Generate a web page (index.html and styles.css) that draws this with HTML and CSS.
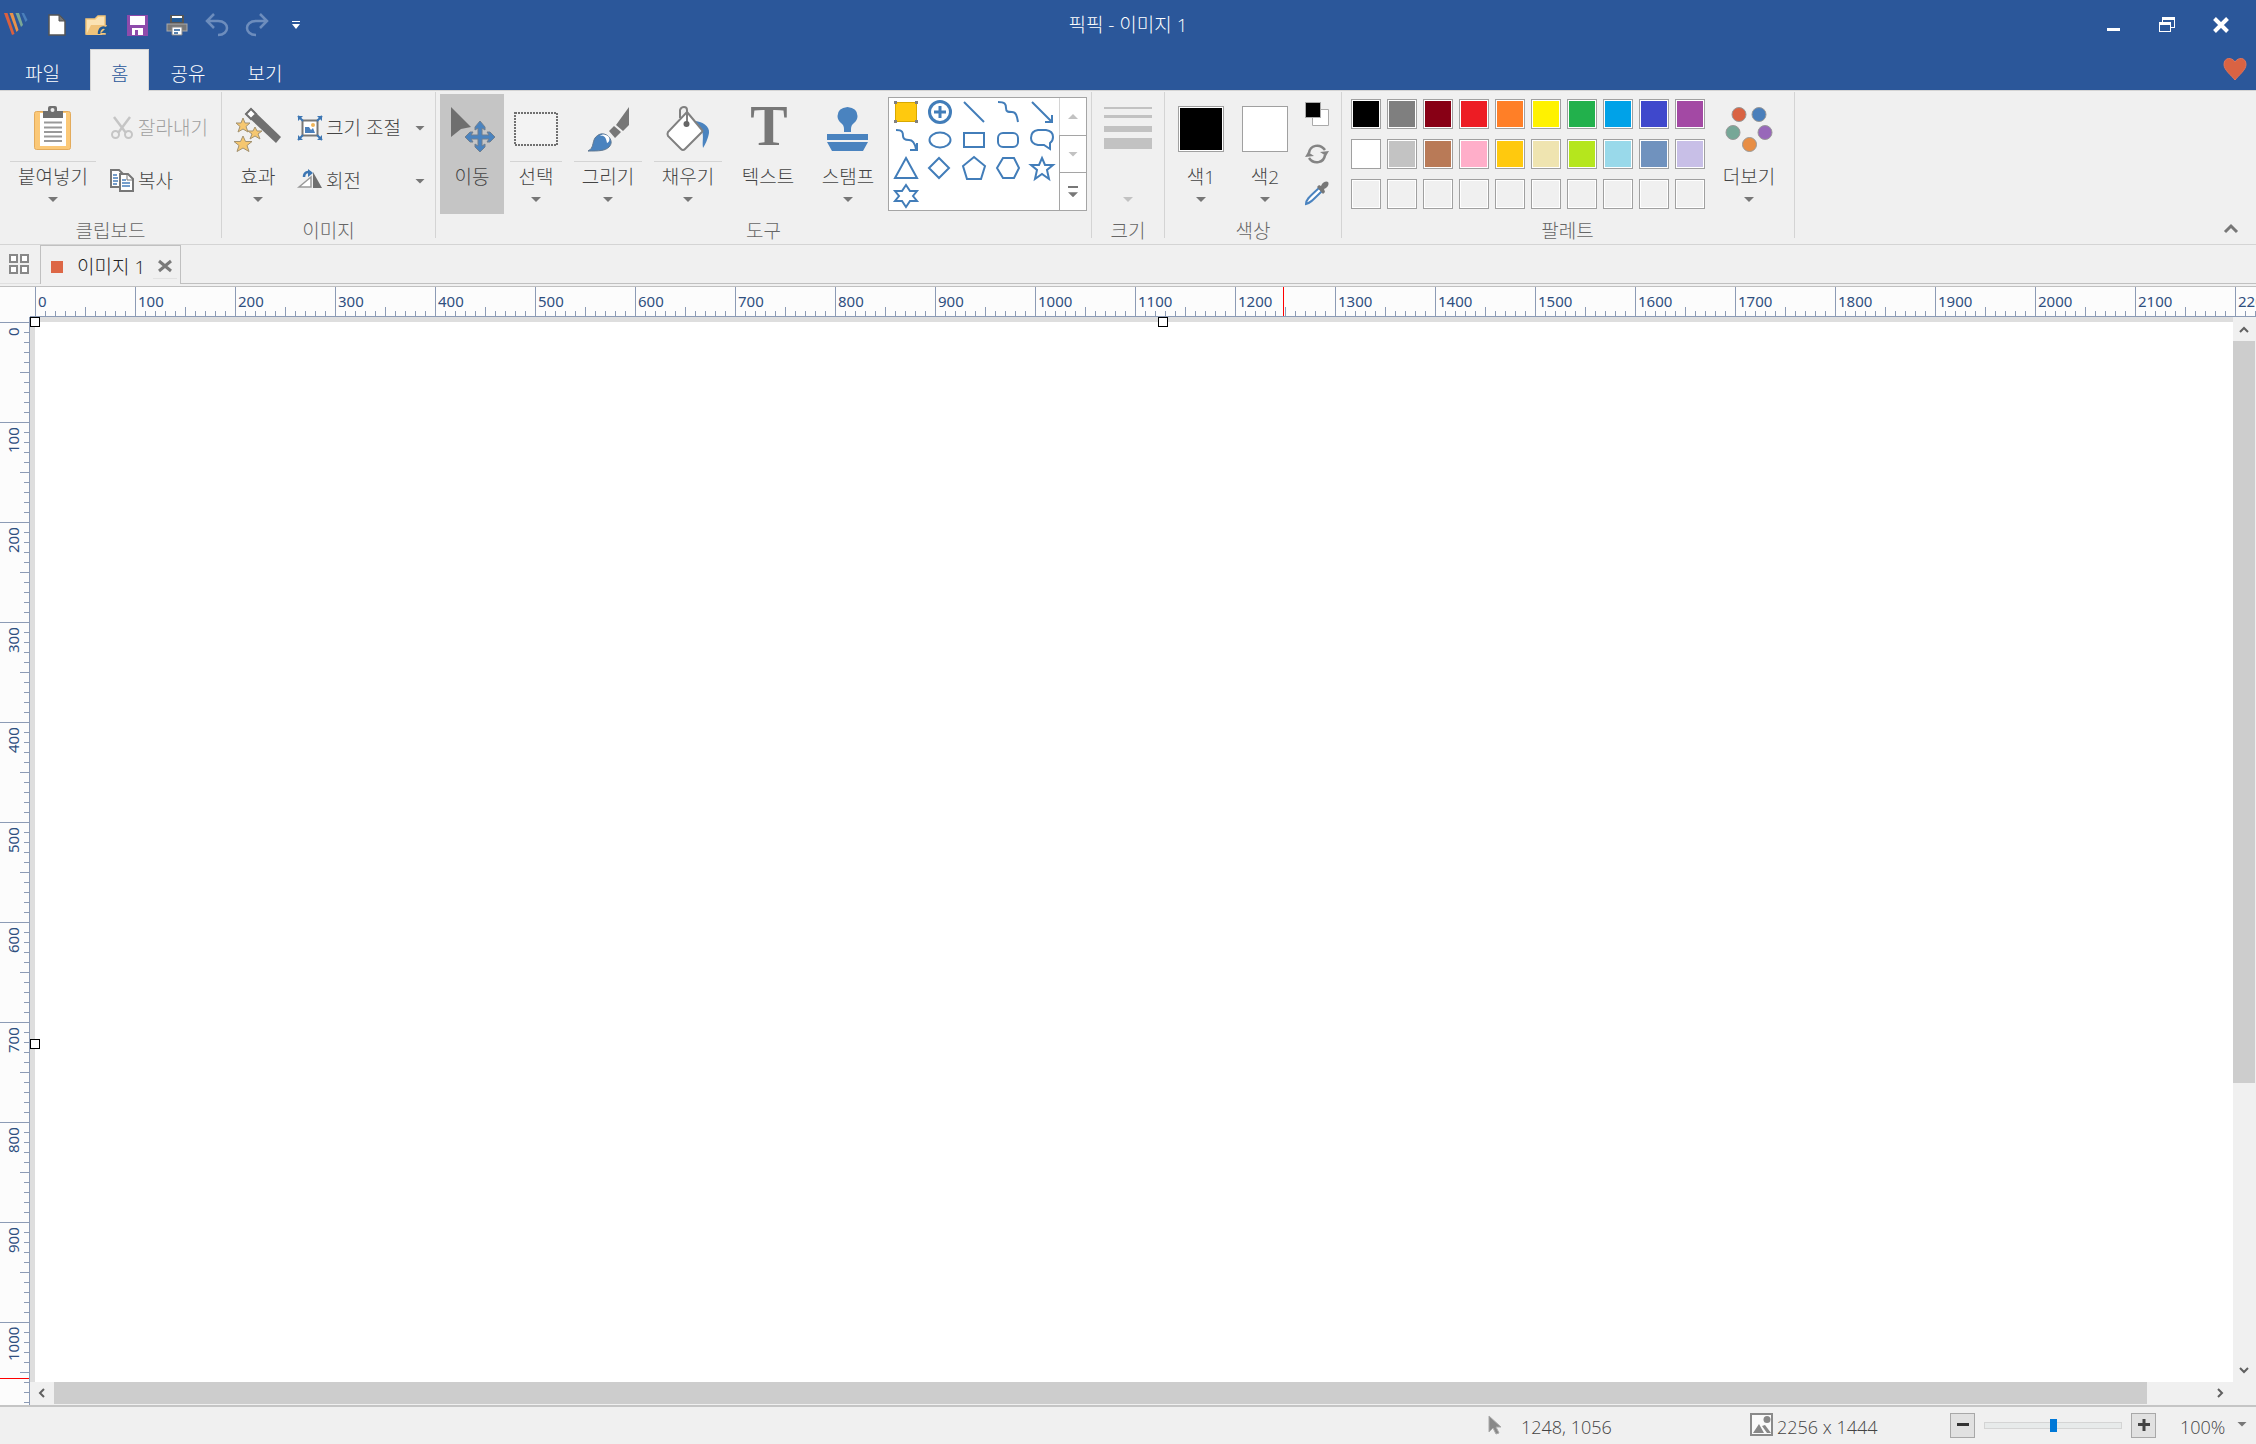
FILE: index.html
```html
<!DOCTYPE html>
<html lang="ko">
<head>
<meta charset="utf-8">
<title>픽픽 - 이미지 1</title>
<link rel="stylesheet" href="styles.css">
</head>
<body>
<header class="titlebar">
  <div class="quick">
    <svg class="logo" viewBox="0 0 24 24"><path fill="#d9603f" d="M0 0h3.500l7 21-2.500 1z"/><path fill="#e8924a" d="M5.500 0H9l5.500 17-2 2z"/><path fill="#7aa896" d="M11.500 0H15l4 12-2 2z"/><path fill="#4a7fbb" d="M17.500 0H20l3.500 7-2 2z"/></svg>
    <button class="quick-btn" aria-label="새로 만들기"><svg class="i24" viewBox="0 0 24 24"><path fill="#fff" stroke="#555" stroke-width="1.500" d="M4 2h10l6 6v14H4z"/><path fill="#777" stroke="#555" d="M14 2v6h6z"/></svg></button>
    <button class="quick-btn" aria-label="열기"><svg class="i24" viewBox="0 0 24 24"><path fill="#fbe3b4" stroke="#f3c577" stroke-width="1.500" d="M1 21V6h9l3-3h7v18z"/><path fill="#f0c37a" d="M1 22l5-10h16l-5 10z"/><path fill="none" stroke="#235a94" stroke-width="2.500" d="M14 21c0-6 4-8 8-5"/><path fill="#235a94" d="M24 12v8h-8z"/></svg></button>
    <button class="quick-btn" aria-label="저장"><svg class="i24" viewBox="0 0 24 24"><path fill="#8e4bab" d="M2 2h21v21H2z"/><path fill="#fff" d="M5 3h15v9H5zM7 15h11v7H7z"/><path fill="#8e4bab" d="M10 17h3v5h-3z"/></svg></button>
    <button class="quick-btn" aria-label="인쇄"><svg class="i24" viewBox="0 0 24 24"><path fill="#235a94" stroke="#555" stroke-width="2" d="M6 10V3h12v7z"/><path fill="#fff" d="M7 3h10v2H7z"/><rect x="2" y="11" width="20" height="7" fill="#777" stroke="#aaa"/><path fill="#fff" stroke="#888" d="M7 14h10v8H7z"/><path stroke="#235a94" stroke-width="1.500" d="M9 17h6M9 20h4"/></svg></button>
    <button class="quick-btn" aria-label="실행 취소"><svg class="i24" viewBox="0 0 24 24"><path fill="none" stroke="#6d8dbd" stroke-width="2.500" d="M3 8h10c12 0 12 14 0 14M9 1L2 8l7 7"/></svg></button>
    <button class="quick-btn" aria-label="다시 실행"><svg class="i24" viewBox="0 0 24 24"><path fill="none" stroke="#6d8dbd" stroke-width="2.500" d="M21 8H11C-1 8-1 22 11 22M15 1l7 7-7 7"/></svg></button>
    <button class="quick-btn narrow" aria-label="빠른 실행 도구 모음 사용자 지정"><svg class="i8" viewBox="0 0 8 8"><path fill="#fff" d="M0 0h8v1H0zM0 3h8L4 8z"/></svg></button>
  </div>
  <h1 class="title">픽픽 - 이미지 1</h1>
  <div class="window-btns">
    <button aria-label="최소화"><svg class="i16" viewBox="0 0 16 16"><path fill="#fff" d="M2 11h13v3H2z"/></svg></button>
    <button aria-label="이전 크기로"><svg class="i16" viewBox="0 0 16 16"><path fill="#fff" fill-rule="evenodd" d="M3 0h13v11h-4v-1h3V3H4v2H3zM0 5h12v10H0zM1 8v6h10V8z"/></svg></button>
    <button aria-label="닫기"><svg class="i16" viewBox="0 0 16 16"><path stroke="#fff" stroke-width="4" d="M1.500 1.500l13 13M14.500 1.500l-13 13"/></svg></button>
  </div>
</header>
<nav class="menu">
  <button class="menu-tab file">파일</button>
  <button class="menu-tab active">홈</button>
  <button class="menu-tab">공유</button>
  <button class="menu-tab">보기</button>
  <button class="heart" aria-label="후원"><svg class="i24" viewBox="0 0 24 24"><path fill="#d96343" stroke="#e2745a" d="M12 22C8 17 1 12 1 6.500 1-1 9-1 12 4c3-5 11-5 11 2.500C23 12 16 17 12 22z"/></svg></button>
</nav>

<main class="ribbon">
  <section class="group">
    <div class="tools">
      <button class="big paste"><svg class="i48" viewBox="0 0 48 48"><rect x="5.500" y="7.500" width="36" height="38" rx="2" fill="#fbc877" stroke="#e3ab5c"/><path fill="#fff" d="M11 9h26v33H11z"/><path fill="#707070" d="M14 14V7h5V4q0-2 2-2h5q2 0 2 2v3h6v7z"/><circle cx="23.500" cy="6" r="2" fill="#eee"/><path stroke="#999" stroke-width="2" d="M15 18.500h18M15 23.500h18M15 28h18M15 32.500h18M15 37h18"/></svg><span class="label ruled">붙여넣기</span><i class="caret"></i></button>
      <div class="stack">
        <button class="small" disabled><svg class="i24" viewBox="0 0 24 24"><path fill="none" stroke="#c5c5c5" stroke-width="2.500" d="M4 1l12 16M20 1L8 17"/><circle cx="5.500" cy="18.500" r="3.500" fill="none" stroke="#c5c5c5" stroke-width="2"/><circle cx="18.500" cy="18.500" r="3.500" fill="none" stroke="#c5c5c5" stroke-width="2"/></svg>잘라내기</button>
        <button class="small"><svg class="i24" viewBox="0 0 24 24"><path fill="#fff" stroke="#777" stroke-width="2" d="M1 1h8l4 4v13H1z"/><path stroke="#4a7fbb" stroke-width="1.500" d="M3 6h4M3 9h5M3 12h5M3 15h4"/><path fill="#fff" stroke="#777" stroke-width="2" d="M10 5h8l5 5v12H10z"/><path fill="none" stroke="#777" d="M17 5v6h6"/><path stroke="#4a7fbb" stroke-width="1.500" d="M12 11h4M12 14h8M12 17h8"/></svg>복사</button>
      </div>
    </div>
    <h2>클립보드</h2>
  </section>
  <section class="group">
    <div class="tools">
      <button class="big"><svg class="i48" viewBox="0 0 48 48"><path fill="#707070" d="M17 4l30 29-5 6L11 10z"/><path fill="#fff" stroke="#707070" stroke-width="2" d="M17 5l5 5-5 5-5-5z"/><g fill="#f6c76f" stroke="#a39270"><path d="M9 14l2 5h5l-4 3.500 2 5.500-5-3-5 3 2-5.500L2 19h5z"/><path d="M21 23l2 4h5l-4 3 2 5-5-3-5 3 2-5-4-3h5z"/><path d="M9 32l2.500 5.500H18l-5 4 2 6-6-3.500-6 3.500 2-6-5-4h6.500z"/></g></svg><span class="label">효과</span><i class="caret"></i></button>
      <div class="stack wide">
        <button class="small"><svg class="i24" viewBox="0 0 24 24"><rect x="4.500" y="4.500" width="15" height="15" fill="#fff" stroke="#777" stroke-width="2"/><path fill="#4a7fbb" d="M7 17V11h4l2 3 2-2 2 5z"/><circle cx="15" cy="9" r="2" fill="#f0b55a"/><path fill="#3d76b3" d="M0 0h5L0 5zM24 0v5l-5-5zM0 24v-5l5 5zM24 24h-5l5-5z"/><path stroke="#3d76b3" stroke-width="2" d="M0 0l5 5M24 0l-5 5M0 24l5-5M24 24l-5-5"/></svg>크기 조절<i class="caret"></i></button>
        <button class="small"><svg class="i24" viewBox="0 0 24 24"><path fill="#fff" stroke="#999" stroke-width="1.500" d="M1 18L13 8v10z"/><path fill="#6f6f6f" d="M15 3l9 16h-9z"/><path fill="none" stroke="#3d76b3" stroke-width="2.500" d="M6 8c0-5 4-6 7-4"/><path fill="#3d76b3" d="M10 0l5 4-5 4z"/></svg>회전<i class="caret"></i></button>
      </div>
    </div>
    <h2>이미지</h2>
  </section>
  <section class="group">
    <div class="tools">
      <button class="big pressed"><svg class="i48" viewBox="0 0 48 48"><path fill="#6f6f6f" d="M3 3l20 20-10 2-10 8z"/><path fill="#4a83bf" stroke="#6f7f90" d="M32 17l5 6v3l-3-2v7h7l-2-3h3l5 5-5 5h-3l2-3h-7v7l3-2v3l-5 5-5-5v-3l3 2v-7h-7l2 3h-3l-5-5 5-5h3l-2 3h7v-7l-3 2v-3z"/></svg><span class="label">이동</span></button>
      <button class="big"><svg class="i48" viewBox="0 0 48 48"><rect x="3" y="9" width="42" height="32" fill="#f3f3f3" stroke="#707070" stroke-width="2" stroke-dasharray="2 1"/></svg><span class="label ruled">선택</span><i class="caret"></i></button>
      <button class="big w80"><svg class="i48" viewBox="0 0 48 48"><path fill="#777" d="M45 3v18l-6 6-7-6zM30 22l7 6-6 6-6-7z"/><path fill="#4a83bf" stroke="#5f7790" d="M4 47c6-3 4-8 7-13 3-4 8-6 13-2 4 4 4 8 1 11-4 4-10 4-21 4z"/><path fill="#fff" d="M16 32c4-1 6 1 7 7 3-1 3-5 1-7-3-2-6-2-8 0z"/></svg><span class="label ruled">그리기</span><i class="caret"></i></button>
      <button class="big w80"><svg class="i48" viewBox="0 0 48 48"><path fill="#4a83bf" d="M30 17c8 0 16 5 15 12-1 6-4 12-6 15-1-7 1-11-1-17z"/><path fill="#fff" stroke="#808080" stroke-width="2" d="M23 8l15 18q1 1 0 2L21 45q-2 2-4 0L4 32q-1-2 0-4z"/><path fill="none" stroke="#808080" stroke-width="2" d="M16 14V6q1-3 4-3t3 3v13"/><circle cx="22.500" cy="20" r="3" fill="#666"/></svg><span class="label ruled">채우기</span><i class="caret"></i></button>
      <button class="big w80"><svg class="i48" viewBox="0 0 48 48"><text class="type-icon" x="25" y="41" text-anchor="middle">T</text></svg><span class="label">텍스트</span></button>
      <button class="big w80"><svg class="i48" viewBox="0 0 48 48"><path fill="#4a83bf" d="M23.500 3q10 1 10 9 0 4-3.500 7-3 2-3 6v3h-7v-3q0-4-3-6-3.500-3-3.500-7 0-8 10-9zM3 30h41v6H3zM3 38h41l-5 9H8z"/></svg><span class="label">스탬프</span><i class="caret"></i></button>
      <div class="gallery">
        <div class="shapes">
          <button aria-label="강조"><svg class="i24" viewBox="0 0 24 24"><rect x="1.500" y="2.500" width="21" height="19" fill="#ffc90e" stroke="#d8a800" stroke-width="1"/><path fill="#808080" stroke="none" d="M0 1h3v3H0zM21 1h3v3h-3zM0 20h3v3H0zM21 20h3v3h-3z"/></svg></button>
          <button aria-label="번호"><svg class="i24" viewBox="0 0 24 24"><circle cx="12" cy="12" r="10.500" stroke-width="3"/><path stroke-width="3" d="M12 6v12M6 12h12"/></svg></button>
          <button aria-label="선"><svg class="i24" viewBox="0 0 24 24"><path d="M2 2l20 20"/></svg></button>
          <button aria-label="곡선"><svg class="i24" viewBox="0 0 24 24"><path d="M2 2c7 0 8 2 8 6s2 4 6 4 5 4 6 10"/></svg></button>
          <button aria-label="화살표"><svg class="i24" viewBox="0 0 24 24"><path d="M2 2l19 19M22 15v7h-7"/></svg></button>
          <button aria-label="곡선 화살표"><svg class="i24" viewBox="0 0 24 24"><path d="M2 2c7 0 7 3 7 6s2 4 6 4 6 4 7 9M23 15v7h-7"/></svg></button>
          <button aria-label="타원"><svg class="i24" viewBox="0 0 24 24"><ellipse cx="12" cy="12" rx="10.500" ry="7.500"/></svg></button>
          <button aria-label="사각형"><svg class="i24" viewBox="0 0 24 24"><path d="M2 5h20v14H2z"/></svg></button>
          <button aria-label="둥근 사각형"><svg class="i24" viewBox="0 0 24 24"><rect x="2" y="5" width="20" height="14" rx="5"/></svg></button>
          <button aria-label="말풍선"><svg class="i24" viewBox="0 0 24 24"><path d="M8 2h8q7 1 7 7 0 4-3 6v6l-6-4H8q-7-1-7-7 0-7 7-8z"/></svg></button>
          <button aria-label="삼각형"><svg class="i24" viewBox="0 0 24 24"><path d="M12 2l11 20H1z"/></svg></button>
          <button aria-label="마름모"><svg class="i24" viewBox="0 0 24 24"><path d="M11 2l10 10-10 10L1 12z"/></svg></button>
          <button aria-label="오각형"><svg class="i24" viewBox="0 0 24 24"><path d="M12 1l11 9-4 13H5L1 10z"/></svg></button>
          <button aria-label="육각형"><svg class="i24" viewBox="0 0 24 24"><path d="M7 2h11l5 10-5 10H7L1 12z"/></svg></button>
          <button aria-label="별"><svg class="i24" viewBox="0 0 24 24"><path d="M12 2l3 7h8l-6 5 2 9-7-5-7 5 2-9-6-5h8z"/></svg></button>
          <button aria-label="육각별"><svg class="i24" viewBox="0 0 24 24"><path d="M12 1l4 6h7l-4 5 4 5h-7l-4 6-4-6H1l4-5-4-5h7z"/></svg></button>
        </div>
        <div class="gallery-nav">
          <button aria-label="위로"><i class="caret up dim"></i></button>
          <button aria-label="아래로"><i class="caret dim"></i></button>
          <button aria-label="모두 보기"><i class="bar"></i><i class="caret"></i></button>
        </div>
      </div>
    </div>
    <h2>도구</h2>
  </section>
  <section class="group">
    <div class="tools">
      <button class="big" aria-label="크기"><svg class="i48" viewBox="0 0 48 48"><path fill="#c2c2c2" d="M0 3h48v2H0zM0 11h48v3H0zM0 22h48v6H0zM0 34h48v11H0z"/></svg><span class="label"></span><i class="caret dim"></i></button>
    </div>
    <h2>크기</h2>
  </section>
  <section class="group">
    <div class="tools">
      <button class="big"><span class="ink"><span class="fill black"></span></span><span class="label">색1</span><i class="caret"></i></button>
      <button class="big"><span class="ink"><span class="fill white"></span></span><span class="label">색2</span><i class="caret"></i></button>
      <div class="stack mini">
        <button aria-label="기본 색"><svg class="i24" viewBox="0 0 24 24"><path fill="#fff" stroke="#aaa" d="M7.500 7.500h16v16h-16z"/><path stroke="#aaa" d="M.5.5h15v15H.5z"/><path d="M2 2h13v13H2z"/></svg></button>
        <button aria-label="색 바꾸기"><svg class="i24" viewBox="0 0 24 24"><path fill="none" stroke="#848484" stroke-width="2.500" d="M4 11c1-8 11-10 16-3M20 13c-1 8-11 10-16 3"/><path fill="#848484" d="M24 9l-3 5-6-4zM0 15l3-5 6 4z"/></svg></button>
        <button aria-label="색 선택"><svg class="i24" viewBox="0 0 24 24"><path fill="#fff" stroke="#4a83bf" stroke-width="2" d="M1 22c0-4 2-6 13-16l3 3C7 19 5 21 1 22z"/><path fill="#777" d="M12 5l2-2 2 1c2-5 6-5 7-4s1 5-4 7l1 3-2 2z"/></svg></button>
      </div>
    </div>
    <h2>색상</h2>
  </section>
  <section class="group">
    <div class="tools">
      <div class="palette">
        <button class="swatch" style="--c:#000000" aria-label="검정"></button><button class="swatch" style="--c:#7f7f7f" aria-label="회색"></button><button class="swatch" style="--c:#880015" aria-label="진한 빨강"></button><button class="swatch" style="--c:#ed1c24" aria-label="빨강"></button><button class="swatch" style="--c:#ff7f27" aria-label="주황"></button><button class="swatch" style="--c:#fff200" aria-label="노랑"></button><button class="swatch" style="--c:#22b14c" aria-label="초록"></button><button class="swatch" style="--c:#00a2e8" aria-label="청록"></button><button class="swatch" style="--c:#3f48cc" aria-label="남색"></button><button class="swatch" style="--c:#a349a4" aria-label="자주"></button>
        <button class="swatch" style="--c:#ffffff" aria-label="흰색"></button><button class="swatch" style="--c:#c3c3c3" aria-label="밝은 회색"></button><button class="swatch" style="--c:#b97a57" aria-label="갈색"></button><button class="swatch" style="--c:#ffaec9" aria-label="장미"></button><button class="swatch" style="--c:#ffc90e" aria-label="황금"></button><button class="swatch" style="--c:#efe4b0" aria-label="밝은 노랑"></button><button class="swatch" style="--c:#b5e61d" aria-label="라임"></button><button class="swatch" style="--c:#99d9ea" aria-label="밝은 청록"></button><button class="swatch" style="--c:#7092be" aria-label="청회색"></button><button class="swatch" style="--c:#c8bfe7" aria-label="연보라"></button>
        <button class="swatch" aria-label="빈 칸"></button><button class="swatch" aria-label="빈 칸"></button><button class="swatch" aria-label="빈 칸"></button><button class="swatch" aria-label="빈 칸"></button><button class="swatch" aria-label="빈 칸"></button><button class="swatch" aria-label="빈 칸"></button><button class="swatch" aria-label="빈 칸"></button><button class="swatch" aria-label="빈 칸"></button><button class="swatch" aria-label="빈 칸"></button><button class="swatch" aria-label="빈 칸"></button>
      </div>
      <button class="big w80"><svg class="i48" viewBox="0 0 48 48"><g stroke="#999"><circle cx="14" cy="10.500" r="7" fill="#d96343"/><circle cx="34" cy="10.500" r="7" fill="#4a7fbb"/><circle cx="8" cy="28.500" r="7" fill="#76a797"/><circle cx="40" cy="28.500" r="7" fill="#9868b9"/><circle cx="24.500" cy="40.500" r="7" fill="#e88e45"/></g></svg><span class="label">더보기</span><i class="caret"></i></button>
    </div>
    <h2>팔레트</h2>
  </section>
  <button class="collapse" aria-label="리본 메뉴 축소"><svg class="i16" viewBox="0 0 16 16"><path fill="none" stroke="#777" stroke-width="3" d="M2 12l6-6 6 6"/></svg></button>
</main>

<div class="docs">
  <button class="overview" aria-label="모든 이미지"><svg class="i20" viewBox="0 0 20 20"><path fill="#fff" stroke="#888" stroke-width="2" d="M1 1h7v7H1zM12 1h7v7h-7zM1 12h7v7H1zM12 12h7v7h-7z"/></svg></button>
  <div class="doc-tab"><i class="dot"></i><span>이미지 1</span><button class="doc-close" aria-label="탭 닫기"><svg class="i16" viewBox="0 0 16 16"><path stroke="#7a7a7a" stroke-width="3" d="M2 3l12 10M14 3L2 13"/></svg></button></div>
  <div class="docs-rest"></div>
</div>

<div class="workspace">
  <div class="corner"></div>
  <div class="ruler-h"><span>0</span><span>100</span><span>200</span><span>300</span><span>400</span><span>500</span><span>600</span><span>700</span><span>800</span><span>900</span><span>1000</span><span>1100</span><span>1200</span><span>1300</span><span>1400</span><span>1500</span><span>1600</span><span>1700</span><span>1800</span><span>1900</span><span>2000</span><span>2100</span><span>2200</span><i class="mark" style="left:1253px"></i></div>
  <div class="ruler-v"><div class="scale"><span>0</span><span>100</span><span>200</span><span>300</span><span>400</span><span>500</span><span>600</span><span>700</span><span>800</span><span>900</span><span>1000</span><i class="mark" style="top:1061px"></i></div></div>
  <div class="view"><div class="artboard" style="width:2256px;height:1444px"><i class="handle nw"></i><i class="handle n"></i><i class="handle w"></i></div></div>
  <div class="scroll-v">
    <button aria-label="위로 스크롤"><svg class="i12" viewBox="0 0 12 12"><path d="M2 9l4-4 4 4"/></svg></button>
    <div class="track"><div class="thumb"></div></div>
    <button aria-label="아래로 스크롤"><svg class="i12" viewBox="0 0 12 12"><path d="M2 4l4 4 4-4"/></svg></button>
  </div>
  <div class="scroll-h">
    <button aria-label="왼쪽으로 스크롤"><svg class="i12" viewBox="0 0 12 12"><path d="M8 2L4 6l4 4"/></svg></button>
    <div class="track"><div class="thumb"></div></div>
    <button aria-label="오른쪽으로 스크롤"><svg class="i12" viewBox="0 0 12 12"><path d="M3 2l4 4-4 4"/></svg></button>
  </div>
</div>

<footer class="status">
  <div class="cell pos"><svg class="i20" viewBox="0 0 20 20"><path fill="#888" stroke="#aaa" d="M4 1l12 11h-5l3 6-3 1-3-6-4 4z"/></svg><span>1248, 1056</span></div>
  <div class="cell dims"><svg class="i24" viewBox="0 0 24 24"><path fill="#fafafa" stroke="#8a8a8a" stroke-width="2" d="M1 1h21v21H1z"/><circle cx="17" cy="6.500" r="3.500" fill="#888"/><path fill="#888" d="M3 20l6-9 5 9zM12 13l3-1 6 8h-4z"/></svg><span>2256 x 1444</span></div>
  <button class="zoom-btn" aria-label="축소"><svg class="i12" viewBox="0 0 12 12"><path fill="#333" d="M0 4h12v3H0z"/></svg></button>
  <input class="zoom" type="range" min="0" max="100" value="50" aria-label="확대/축소">
  <button class="zoom-btn" aria-label="확대"><svg class="i12" viewBox="0 0 12 12"><path fill="#444" d="M0 4h12v3H0zM4.500 0h3v12h-3z"/></svg></button>
  <button class="zoom-value">100%<i class="caret"></i></button>
</footer>
</body>
</html>
```
FILE: styles.css
```css
* { box-sizing: border-box; }

body {
  margin: 0;
  height: 100vh;
  display: flex;
  flex-direction: column;
  overflow: hidden;
  background: #f0f0f0;
  color: #444;
  font: 300 19px/28px "Open Sans", "Noto Sans CJK KR", sans-serif;
}

button {
  margin: 0;
  padding: 0;
  border: 0;
  background: none;
  color: inherit;
  font: inherit;
  display: flex;
  align-items: center;
  justify-content: center;
}

svg { display: block; flex: none; overflow: visible; }
.i8 { width: 8px; height: 8px; }
.i12 { width: 12px; height: 12px; }
.i16 { width: 16px; height: 16px; }
.i20 { width: 20px; height: 20px; }
.i24 { width: 24px; height: 24px; }
.i48 { width: 48px; height: 48px; }

.caret {
  flex: none;
  width: 10px;
  height: 5px;
  background: #777;
  clip-path: polygon(0 0, 100% 0, 50% 100%);
}
.caret.dim { background: #c2c2c2; }
.caret.up { transform: rotate(180deg); }

/* Title bar */
.titlebar {
  flex: none;
  display: grid;
  grid-template-columns: 1fr auto 1fr;
  align-items: center;
  height: 49px;
  background: #2b579a;
  color: #fff;
}
.quick { display: flex; align-items: center; }
.logo { width: 24px; height: 24px; margin: 0 9px 0 4px; }
.quick-btn { width: 40px; height: 40px; }
.quick-btn.narrow { width: 38px; }
.title { margin: 0; padding-top: 1px; font-size: 19px; font-weight: 300; }
.window-btns { display: flex; justify-content: flex-end; padding-right: 8px; }
.window-btns button { width: 54px; height: 40px; }

/* Menu tabs */
.menu {
  flex: none;
  display: flex;
  height: 42px;
  padding-right: 9px;
  background: linear-gradient(#2b579a 41px, #d4d4d4 41px);
  color: #fff;
}
.menu-tab { padding: 6px 20px 0; border: 1px solid transparent; border-bottom: 0; }
.menu-tab.file { padding: 6px 24px 0; margin-right: 5px; }
.menu-tab.active { background: #f0f0f0; border-color: #d4d4d4; color: #2b579a; }
.heart { margin-left: auto; height: 41px; }

/* Ribbon */
.ribbon {
  flex: none;
  display: flex;
  height: 154px;
  padding: 1px 0 6px;
  border-bottom: 1px solid #d4d4d4;
}
.group { padding: 2px 4px 0; border-right: 1px solid #d4d4d4; }
.group:last-of-type { padding-right: 5px; }
.group h2 {
  margin: 4px 0 0;
  color: #666;
  font-size: 19px;
  font-weight: 300;
  line-height: 26px;
  text-align: center;
}
.tools { display: flex; height: 120px; }
.big {
  width: 64px;
  flex-direction: column;
  justify-content: flex-start;
  padding: 10px 6px 0;
}
.big.w80 { width: 80px; }
.big.paste { width: 98px; }
.big.pressed { background: #c5c5c5; }
.label {
  align-self: stretch;
  height: 32px;
  margin: 9px 0 4px;
  border-top: 1px solid transparent;
  line-height: 30px;
  white-space: nowrap;
}
.label.ruled { border-color: #d4d4d4; }
.type-icon { font: bold 56px "Liberation Serif", serif; fill: #777; }

.stack { display: flex; flex-direction: column; justify-content: center; gap: 13px; width: 115px; }
.stack.wide { width: 141px; }
.small { height: 40px; padding: 1px 6px 0 8px; justify-content: flex-start; gap: 4px; white-space: nowrap; }
.small:disabled { color: #a0a0a0; }
.small .caret { margin-left: auto; }
.stack.mini { width: 40px; gap: 0; }
.mini button { height: 40px; }

.gallery {
  display: flex;
  width: 199px;
  height: 114px;
  margin-top: 3px;
  border: 1px solid #a5a5a5;
  background: #fff;
}
.shapes { display: grid; grid-template-columns: repeat(5, 34px); grid-auto-rows: 28px; }
.shapes svg { fill: none; stroke: #427db9; stroke-width: 2; }
.gallery-nav { flex: 1; display: flex; flex-direction: column; }
.gallery-nav button {
  flex: 1;
  flex-direction: column;
  gap: 4px;
  border-left: 1px solid #a5a5a5;
}
.gallery-nav button:first-child { border-color: #d4d4d4; }
.gallery-nav button + button { border-top: 1px solid #a5a5a5; }
.bar { width: 10px; height: 2px; background: #777; }

.ink {
  width: 46px;
  height: 46px;
  margin: 2px 0 0;
  padding: 1px;
  border: 1px solid #a0a0a0;
  background: #fff;
}
.fill { display: block; height: 100%; }
.fill.black { background: #000; }
.fill.white { background: #fff; }

.palette {
  display: grid;
  grid-template-columns: repeat(10, 36px);
  grid-auto-rows: 40px;
  place-items: center;
  margin: 0 1px 0 2px;
}
.swatch {
  width: 30px;
  height: 30px;
  border: 1px solid #a0a0a0;
  background: var(--c, #f0f0f0);
  box-shadow: inset 0 0 0 1px #fff;
}
.collapse { margin: auto 17px 2px auto; }

/* Document tabs */
.docs { flex: none; display: flex; height: 42px; padding-bottom: 2px; border-bottom: 1px solid #c0c0c0; }
.overview { width: 40px; border-bottom: 1px solid #e0e0e0; }
.overview svg { margin-left: -2px; }
.doc-tab {
  display: flex;
  align-items: center;
  width: 141px;
  padding: 3px 3px 0 10px;
  border: 1px solid #c0c0c0;
  border-bottom: 0;
  color: #222;
}
.dot { width: 12px; height: 12px; margin-right: 14px; background: #dd6746; }
.doc-close { width: 24px; height: 24px; margin-left: auto; border-bottom: 1px solid #e2e2e2; }
.docs-rest { flex: 1; border-bottom: 1px solid #c0c0c0; }

/* Workspace */
.workspace {
  flex: 1;
  min-height: 0;
  display: grid;
  grid-template: 30px minmax(0, 1fr) 23px / 30px minmax(0, 1fr) 23px;
}
.corner, .ruler-h, .ruler-v {
  background-color: #fcfcfc;
  color: #2f4f7f;
  font: 400 15px/28px "Noto Sans", sans-serif;
}
.ruler-h {
  position: relative;
  grid-column: 2 / 4;
  display: flex;
  overflow: hidden;
  padding-left: 5px;
  border-bottom: 1px solid #8c9bb5;
  background-image:
    linear-gradient(90deg, #8c9bb5 1px, transparent 1px),
    linear-gradient(90deg, #8c9bb5 1px, transparent 1px),
    linear-gradient(90deg, #8c9bb5 1px, transparent 1px);
  background-position: 5px 100%, 5px 100%, 5px 0;
  background-size: 10px 5px, 50px 9px, 100px 29px;
  background-repeat: repeat-x;
}
.ruler-h span { flex: 0 0 100px; padding-left: 3px; }
.ruler-v {
  grid-row: 2 / 4;
  overflow: hidden;
  border-right: 1px solid #8c9bb5;
  background-image:
    linear-gradient(#8c9bb5 1px, transparent 1px),
    linear-gradient(#8c9bb5 1px, transparent 1px),
    linear-gradient(#8c9bb5 1px, transparent 1px);
  background-position: 100% 5px, 100% 5px, 0 5px;
  background-size: 5px 10px, 9px 50px, 29px 100px;
  background-repeat: repeat-y;
}
.scale { position: relative; padding-top: 5px; }
.scale span {
  display: block;
  height: 100px;
  padding-bottom: 5px;
  line-height: 26px;
  text-align: right;
  writing-mode: vertical-rl;
  transform: rotate(180deg);
}
.mark { position: absolute; background: #f00; }
.ruler-h .mark { top: 0; width: 1px; height: 30px; }
.scale .mark { left: 0; width: 30px; height: 1px; }

.view { overflow: hidden; padding: 5px 0 0 5px; background: #dedede; }
.artboard { position: relative; background: #fff; }
.handle { position: absolute; width: 10px; height: 10px; border: 1px solid #000; background: #fff; }
.nw { left: -5px; top: -5px; }
.n { left: calc(50% - 5px); top: -5px; }
.w { left: -5px; top: calc(50% - 5px); }

.scroll-v { grid-row: 2 / 4; grid-column: 3; display: flex; flex-direction: column; padding: 0 1px 23px 0; }
.scroll-h { grid-column: 2; display: flex; padding-bottom: 1px; }
.scroll-v button, .scroll-h button { flex: none; width: 24px; height: 22px; }
.scroll-v button { width: 22px; height: 24px; }
.scroll-v svg, .scroll-h svg { fill: none; stroke: #606060; stroke-width: 2; }
.track { flex: 1; min-height: 0; }
.thumb { background: #cdcdcd; }
.scroll-v .thumb { height: 73%; }
.scroll-h .thumb { width: 97.1%; height: 100%; }

/* Status bar */
.status {
  flex: none;
  display: flex;
  align-items: center;
  justify-content: flex-end;
  height: 39px;
  padding: 3px 9px 0 0;
  border-top: 2px solid #c5c5c5;
  font-size: 18px;
}
.cell { display: flex; align-items: center; }
.pos { width: 265px; gap: 16px; }
.pos svg { margin-top: -4px; }
.dims { width: 200px; gap: 3px; }
.dims svg { margin-top: -4px; }
.zoom-btn { width: 25px; height: 25px; margin-top: -4px; border: 1px solid #a8a8a8; background: #e1e1e1; }
.zoom {
  appearance: none;
  width: 138px;
  height: 13px;
  margin: -4px 9px 0;
  background: linear-gradient(#e7eaea, #e7eaea) 50% 50% / 136px 5px no-repeat, linear-gradient(#d4d4d4, #d4d4d4) 50% 50% / 138px 7px no-repeat;
}
.zoom::-webkit-slider-thumb { appearance: none; width: 7px; height: 13px; background: #0078d7; }
.zoom-value { width: 91px; padding-left: 24px; justify-content: space-between; }
.zoom-value .caret { margin-top: -6px; }
```
